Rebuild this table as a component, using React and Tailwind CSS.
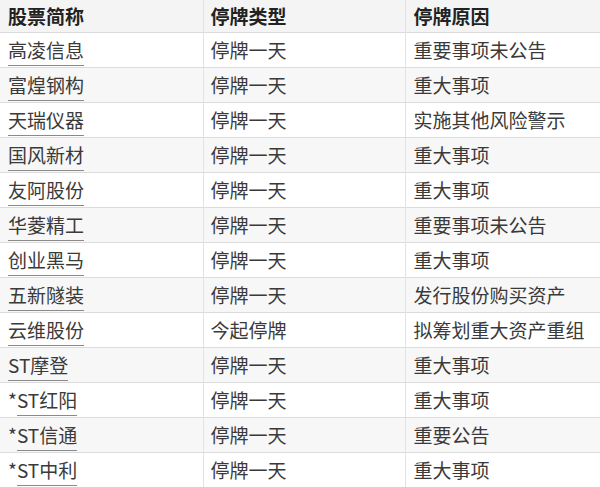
const rows = [
  ["", "高凌信息", "停牌一天", "重要事项未公告"],
  ["", "富煌钢构", "停牌一天", "重大事项"],
  ["", "天瑞仪器", "停牌一天", "实施其他风险警示"],
  ["", "国风新材", "停牌一天", "重大事项"],
  ["", "友阿股份", "停牌一天", "重大事项"],
  ["", "华菱精工", "停牌一天", "重要事项未公告"],
  ["", "创业黑马", "停牌一天", "重大事项"],
  ["", "五新隧装", "停牌一天", "发行股份购买资产"],
  ["", "云维股份", "今起停牌", "拟筹划重大资产重组"],
  ["", "ST摩登", "停牌一天", "重大事项"],
  ["*", "ST红阳", "停牌一天", "重大事项"],
  ["*", "ST信通", "停牌一天", "重要公告"],
  ["*", "ST中利", "停牌一天", "重大事项"],
]

export default function App() {
  return (
    <div
      className="w-[600px] h-[487px] bg-white overflow-hidden"
      style={{ fontFamily: '"Noto Sans CJK SC", "Noto Sans", sans-serif' }}
    >
      <table className="w-[600px] border-collapse table-fixed">
        <colgroup>
          <col className="w-[203px]" />
          <col className="w-[202px]" />
          <col className="w-[195px]" />
        </colgroup>
        <thead>
          <tr className="h-[32px] bg-[#f4f4f4] border-b border-[#dcdcdc]">
            <th className="text-left font-bold text-[19px] text-[#222] px-[8px] py-0 leading-none">股票简称</th>
            <th className="text-left font-bold text-[19px] text-[#222] px-[7px] py-0 leading-none border-l border-[#e2e2e2]">停牌类型</th>
            <th className="text-left font-bold text-[19px] text-[#222] px-[8px] py-0 leading-none border-l border-[#e2e2e2]">停牌原因</th>
          </tr>
        </thead>
        <tbody>
          {rows.map((r, i) => (
            <tr
              key={i}
              className={
                "h-[35px] border-b border-[#dcdcdc] " +
                (i % 2 === 1 ? "bg-[#f7f7f7]" : "bg-white")
              }
            >
              <td className="px-[8px] py-0 text-[19px] text-[#3a3a3a] leading-none">
                {r[0]}
                <span className="border-b border-[#8a8a8a] pb-[2px]">{r[1]}</span>
              </td>
              <td className="px-[7px] py-0 text-[19px] text-[#3a3a3a] leading-none border-l border-[#e2e2e2]">{r[2]}</td>
              <td className="px-[8px] py-0 text-[19px] text-[#3a3a3a] leading-none border-l border-[#e2e2e2]">{r[3]}</td>
            </tr>
          ))}
        </tbody>
      </table>
    </div>
  )
}
